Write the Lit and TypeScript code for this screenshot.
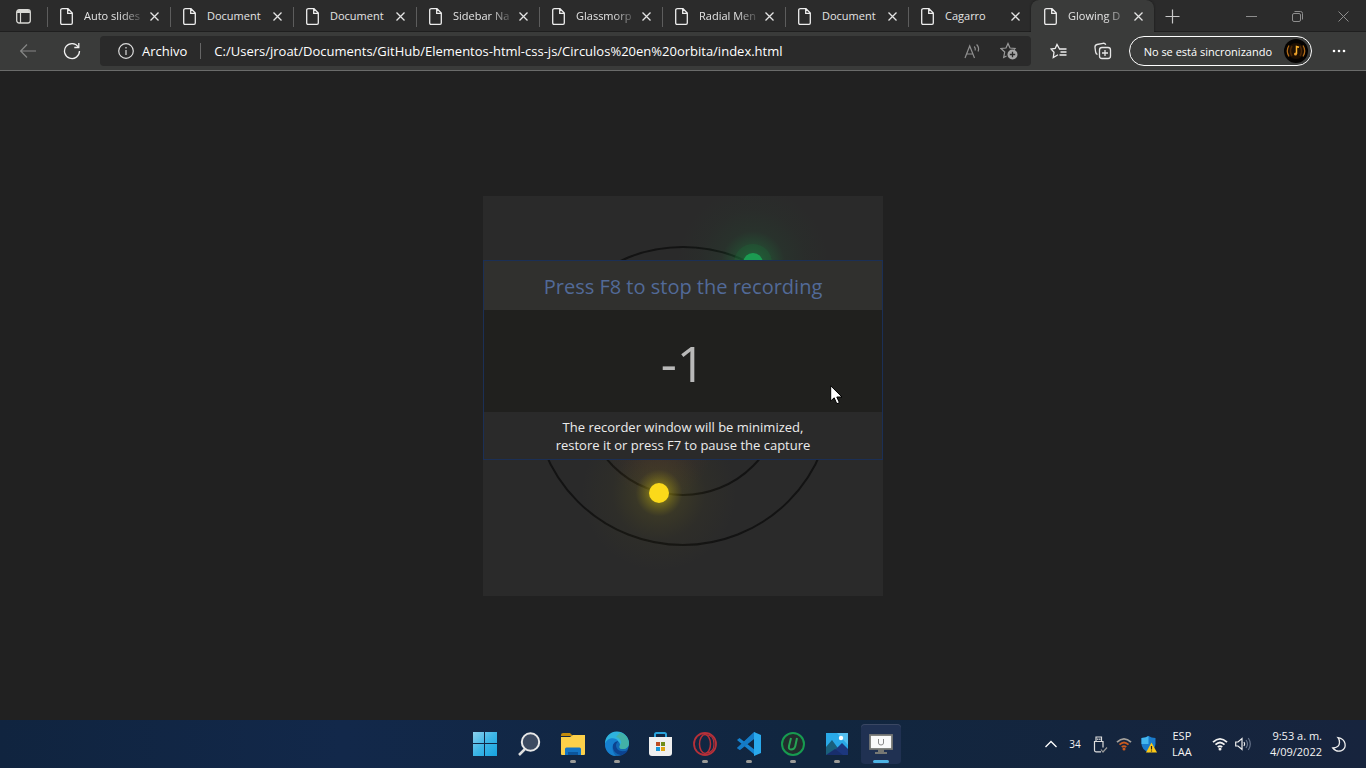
import { LitElement, html, css, svg, nothing } from "lit";
import { customElement } from "lit/decorators.js";
import { classMap } from "lit/directives/class-map.js";

interface Tab { title: string; fade?: boolean; active?: boolean; }

const TABS: Tab[] = [
  { title: "Auto slides", fade: true },
  { title: "Document" },
  { title: "Document" },
  { title: "Sidebar Na", fade: true },
  { title: "Glassmorp", fade: true },
  { title: "Radial Men", fade: true },
  { title: "Document" },
  { title: "Cagarro" },
  { title: "Glowing D", fade: true, active: true },
];

const closeIcon = svg`<path d="M1.500 1.500l8 8M9.500 1.500l-8 8" stroke="currentColor" stroke-width="1.300" fill="none"/>`;

@customElement("browser-tabs")
class BrowserTabs extends LitElement {
  static styles = css`
    :host { display: flex; height: 32px; background: #2b2b2b; color: #e4e4e4; box-shadow: inset 0 -1px #1f1f1f; }
    button { all: unset; box-sizing: border-box; display: flex; align-items: center; justify-content: center; }
    svg { display: block; flex: none; }
    .actions { width: 47px; }
    .tab { display: flex; align-items: center; flex: 0 1 123px; min-width: 0; box-sizing: border-box; padding: 0 10px 0 13px; position: relative; }
    .tab:not(.active)::before { content: ""; position: absolute; left: 0; top: 7px; height: 20px; width: 1px; background: #5d5d5d; }
    .active { background: #3a3b3a; border-radius: 8px 8px 0 0; box-shadow: 0 0 2px #151515; clip-path: inset(-2px -3px 0 -3px); }
    .pick { flex: 1; min-width: 0; justify-content: flex-start; gap: 11px; }
    .title { font-size: 11px; line-height: 16px; white-space: nowrap; width: 62px; }
    .fade { -webkit-mask-image: linear-gradient(90deg, #000 60%, transparent); mask-image: linear-gradient(90deg, #000 60%, transparent); }
    .close { width: 12px; height: 20px; flex: none; }
    .add { width: 36px; }
    .space { flex: 1; }
    .win { width: 46px; color: #8d8d8d; }
  `;
  render() {
    return html`
      <button class="actions" aria-label="Tab actions"><svg width="15" height="15" viewBox="0 0 15 15"><rect x=".7" y=".7" width="13.600" height="13.300" rx="2.500" fill="none" stroke="#d8d8d4" stroke-width="1.300"/><path d="M1 2.500Q1 1 3 1h9q2 0 2 1.500V4H1z" fill="#d8d8d4"/><path d="M4.500 4v10" stroke="#d8d8d4" stroke-width="1.200"/></svg></button>
      ${TABS.map(t => html`<div class=${classMap({ tab: true, active: !!t.active })}>
        <button class="pick"><svg width="13" height="17" viewBox="0 0 13 17"><path d="M2.500 .700H8L12.300 5v10q0 1.300-1.300 1.300H2q-1.300 0-1.300-1.300V2Q.7.700 2.500.700zM7.700 1v4.300h4.500" fill="none" stroke="#ededed" stroke-width="1.300"/></svg><span class=${classMap({ title: true, fade: !!t.fade })}>${t.title}</span></button>
        <button class="close" aria-label="Close tab"><svg width="11" height="11" viewBox="0 0 11 11">${closeIcon}</svg></button>
      </div>`)}
      <button class="add" aria-label="New tab"><svg width="15" height="15" viewBox="0 0 15 15"><path d="M7.500 .500v14M.500 7.500h14" stroke="#c8c8c8" stroke-width="1.200"/></svg></button>
      <span class="space"></span>
      <button class="win" aria-label="Minimize"><svg width="11" height="11"><path d="M0 5.500h11" stroke="currentColor"/></svg></button>
      <button class="win" aria-label="Restore"><svg width="11" height="11" viewBox="0 0 11 11" fill="none" stroke="currentColor"><rect x=".5" y="2.500" width="8" height="8" rx="1.500"/><path d="M2.500 .500H8.500q2 0 2 2v6"/></svg></button>
      <button class="win" aria-label="Close"><svg width="11" height="11" viewBox="0 0 11 11"><path d="M.5.500l10 10M10.500.500l-10 10" stroke="currentColor"/></svg></button>`;
  }
}

@customElement("browser-toolbar")
class BrowserToolbar extends LitElement {
  static styles = css`
    :host { display: flex; align-items: center; height: 38px; background: #3a3b3a; color: #fff; border-bottom: 1px solid #6a6b6a; }
    button { all: unset; box-sizing: border-box; display: flex; align-items: center; justify-content: center; height: 30px; width: 44px; }
    svg { display: block; flex: none; }
    .nav { display: flex; padding: 0 6px; }
    .address { flex: 1; display: flex; align-items: center; height: 30px; box-sizing: border-box; background: #2a2a2a; border-radius: 4px; padding: 0 4px 0 18px; min-width: 0; font-size: 13px; }
    .scheme { padding: 0 13px 0 8px; }
    .bar { width: 1px; height: 16px; background: #666; }
    .url { all: unset; flex: 1; min-width: 0; padding-left: 13px; font-size: 13px; line-height: 20px; }
    .tool { width: 36px; }
    .side { display: flex; padding-left: 6px; }
    .profile { width: auto; border: 1px solid #fff; border-radius: 15px; padding: 0 3px 0 14px; gap: 12px; font-size: 11px; margin-left: 4px; white-space: nowrap; }
    .more { margin: 0 5px; }
  `;
  render() {
    return html`
      <div class="nav">
        <button aria-label="Back"><svg width="16" height="14" viewBox="0 0 16 14"><path d="M7 .500L.700 7 7 13.500M1 7h15" fill="none" stroke="#858685" stroke-width="1.200"/></svg></button>
        <button aria-label="Reload"><svg width="18" height="18" viewBox="0 0 18 18" fill="none" stroke="#f1f1f1" stroke-width="1.300"><path d="M15.300 5A7.500 7.500 0 1 0 16.500 9"/><path d="M15.800 1v4.500h-4.500"/></svg></button>
      </div>
      <div class="address">
        <svg width="16" height="16" viewBox="0 0 16 16" fill="none" stroke="#dcdcdc" stroke-width="1.200"><circle cx="8" cy="8" r="7.300"/><path d="M8 7v5M8 4v1.500"/></svg>
        <label class="scheme" for="url">Archivo</label><span class="bar"></span>
        <input id="url" class="url" value="C:/Users/jroat/Documents/GitHub/Elementos-html-css-js/Circulos%20en%20orbita/index.html">
        <button class="tool" aria-label="Read aloud"><svg width="17" height="15" viewBox="0 0 17 15" fill="none" stroke="#8f8f8f" stroke-width="1.200"><path d="M1 14L5.700 2 10.500 14M2.500 10h6.500M10.200 2.500q1.500 1.500 1 4M12.600 .500q3 3 1.500 7"/></svg></button>
        <button class="tool" aria-label="Add to favorites"><svg width="18" height="18" viewBox="0 0 18 18"><path d="M6.500 14L3.700 15.500l1-5.500L1 6.500 6 6l2-4.500L10 6l5 .500-1 1" fill="none" stroke="#9a9a9a" stroke-width="1.200"/><circle cx="12.500" cy="12.500" r="5" fill="#a7a7a7"/><path d="M12.500 9.800v5.400M9.800 12.500h5.400" stroke="#2a2a2a" stroke-width="1.300"/></svg></button>
      </div>
      <div class="side">
        <button aria-label="Favorites"><svg width="18" height="16" viewBox="0 0 18 16" fill="none" stroke="#eee" stroke-width="1.300"><path d="M9.500 6L7 1.500 5.200 5.500 1 6l3 3.300L3.300 14.500 8 11.800M9 6h7.500M10.500 9h6M9.500 12h7"/></svg></button>
        <button aria-label="Collections"><svg width="18" height="18" viewBox="0 0 18 18" fill="none" stroke="#e6e6e6" stroke-width="1.300"><rect x="5.500" y="5.500" width="11" height="11" rx="2.500"/><path d="M11 8v6M8 11h6M3.500 12.500Q2 12 1.600 10L1 5.500Q.8 3 3 2.500L9 1.300q2-.3 2.800 1.500"/></svg></button>
        <button class="profile">No se está sincronizando<svg width="24" height="24" viewBox="0 0 24 24"><circle cx="12" cy="12" r="12" fill="#050302"/><circle cx="12" cy="12" r="8" fill="#1d0f03"/><path d="M5 6.500Q1.500 12 5 17.500M19 6.500Q22.500 12 19 17.500" fill="none" stroke="#b06a18" stroke-width="1.300"/><path d="M8 7Q5 12 8 17M16 7Q19 12 16 17" fill="none" stroke="#4c2807" stroke-width="1.500"/><path d="M12.500 15V7.500l2.500.7" fill="none" stroke="#ffb52c" stroke-width="1.500"/><circle cx="11.500" cy="15" r="1.500" fill="#e89b28"/></svg></button>
        <button class="more" aria-label="Settings"><svg width="14" height="4"><circle cx="2" cy="2" r="1.300" fill="#fff"/><circle cx="7" cy="2" r="1.300" fill="#fff"/><circle cx="12" cy="2" r="1.300" fill="#fff"/></svg></button>
      </div>`;
  }
}

@customElement("orbit-page")
class OrbitPage extends LitElement {
  static styles = css`
    :host { flex: 1; display: grid; place-items: center; background: #212121; min-height: 0; }
    .card { position: relative; width: 400px; height: 400px; background: #2a2a2a; }
    .scene { display: block; width: 100%; height: 100%; }
    .recorder { position: absolute; left: 0; right: 0; top: 64px; box-sizing: border-box; border: 1px solid #1b2f55; background: #2a2a2a; text-align: center; color: #ececec; }
    .head { background: #30302e; color: #526a98; font-size: 20px; font-weight: 400; line-height: 49px; padding-top: 1px; height: 48px; margin: 0; }
    .count { background: #20201e; color: #b9b9b9; font-size: 50px; line-height: 98px; padding-top: 4px; }
    .note { margin: 0; padding: 6px 0 5px; font-size: 13px; line-height: 18px; }
    .cursor { position: absolute; left: 347px; top: 189px; }
  `;
  render() {
    return html`<div class="card">
      <svg class="scene" viewBox="0 0 400 400">
        <defs>
          <radialGradient id="g"><stop offset="0" stop-color="#1c9c50" stop-opacity=".5"/><stop offset=".22" stop-color="#1c8040" stop-opacity=".34"/><stop offset=".42" stop-color="#1c8040" stop-opacity=".09"/><stop offset=".7" stop-color="#1c8040" stop-opacity=".03"/><stop offset="1" stop-color="#1c8040" stop-opacity="0"/></radialGradient>
          <radialGradient id="y"><stop offset="0" stop-color="#fada15" stop-opacity=".5"/><stop offset=".13" stop-color="#b8a810" stop-opacity=".48"/><stop offset=".3" stop-color="#a09010" stop-opacity=".13"/><stop offset=".6" stop-color="#908010" stop-opacity=".04"/><stop offset="1" stop-color="#908010" stop-opacity="0"/></radialGradient>
          <radialGradient id="r"><stop offset="0" stop-color="#ff4040" stop-opacity=".07"/><stop offset="1" stop-color="#ff4040" stop-opacity="0"/></radialGradient>
        </defs>
        <circle cx="200" cy="200" r="149" fill="none" stroke="#131313" stroke-width="2"/>
        <circle cx="200" cy="200" r="99" fill="none" stroke="#131313" stroke-width="2"/>
        <circle cx="176" cy="250" r="55" fill="url(#r)"/>
        <circle cx="270" cy="67" r="76" fill="url(#g)"/><circle cx="270" cy="67" r="19" fill="#1f6a38" fill-opacity=".3"/><circle cx="270" cy="67" r="10" fill="#1b9b51"/>
        <circle cx="176" cy="297" r="78" fill="url(#y)"/><circle cx="176" cy="297" r="10" fill="#fbd91a"/>
      </svg>
      <section class="recorder">
        <h1 class="head">Press F8 to stop the recording</h1>
        <div class="count">-1</div>
        <p class="note">The recorder window will be minimized,<br>restore it or press F7 to pause the capture</p>
      </section>
      <svg class="cursor" width="13" height="20" viewBox="0 0 13 20"><path d="M.7.800V16l3.500-3.200 2.600 6 2.600-1.200-2.600-5.600H12z" fill="#fff" stroke="#000" stroke-width="1"/></svg>
    </div>`;
  }
}

const wifi = (a: string, b: string) => svg`<g fill="none" stroke-width="1.800"><path d="M1 5.200Q8-1.500 15 5.200" stroke=${a}/><path d="M3.500 7.700Q8 3.300 12.500 7.700" stroke=${b}/><path d="M5.800 10.200Q8 8 10.200 10.200" stroke=${b}/></g><circle cx="8" cy="12" r="1.500" fill=${b}/>`;

const APPS = [
  { name: "Inicio", run: 0, art: svg`<defs><linearGradient id="w" x2="1" y2="1"><stop stop-color="#8bd0ee"/><stop offset=".5" stop-color="#3cb5e6"/><stop offset="1" stop-color="#16a3e0"/></linearGradient></defs><path d="M0 0h11v11H0zM12 0h12v11H12zM0 12h11v12H0zM12 12h12v12H12z" fill="url(#w)"/>` },
  { name: "Buscar", run: 0, art: svg`<path d="M8 17L2 23" stroke="#dedede" stroke-width="2.500"/><circle cx="13.500" cy="10" r="8.700" fill="#3c4a61" stroke="#e8e8e8" stroke-width="2"/>` },
  { name: "Explorador", run: 1, art: svg`<path d="M0 3q0-2 2-2h7l3 3H0z" fill="#c28a0b"/><path d="M0 5h9l3-2h12v19q0 1-1 1H1q-1 0-1-1z" fill="#fcd04a"/><path d="M4 23v-6q0-1.500 1.500-1.500h13q1.500 0 1.500 1.500v6z" fill="#1474c4"/><path d="M7 23v-3h10v3" fill="#0c559c"/>` },
  { name: "Edge", run: 1, art: svg`<circle cx="12" cy="12" r="12" fill="#1268b4"/><path d="M0 12A12 12 0 0 1 24 11c0 4-3 6-6 6-4 0-4-2-3-4C15 7 4 5 0 12z" fill="#2eb2dd"/><path d="M15 .500A12 12 0 0 1 24 11c0 4-3 6-6 6-4 0-4-2-3-4 3-3 0-7-4-8z" fill="#50b083" fill-opacity=".6"/><path d="M10 9c-5 5-1 14 7 14 3-1 5-3 6-5-7 3-12 0-12-5 0-2 2-3 2-4z" fill="#0c4390"/><path d="M0 12c2-7 11-7 13-3-7 1-7 10-2 15C4 24 0 18 0 12z" fill="#1680cf"/>` },
  { name: "Store", run: 0, art: svg`<path d="M6 6V2.500Q6 1 7.500 1h8Q17 1 17 2.500V6" fill="none" stroke="#29a3dc" stroke-width="2"/><path d="M0 5h23v16q0 3-3 3H3q-3 0-3-3z" fill="#efefef"/><path d="M7 10h4v4H7z" fill="#bc4b20"/><path d="M12 10h4v4h-4z" fill="#6f8c18"/><path d="M7 15h4v4H7z" fill="#1596d8"/><path d="M12 15h4v4h-4z" fill="#e0a512"/>` },
  { name: "Opera", run: 1, art: svg`<g fill="none" stroke="#b53039"><circle cx="12" cy="12" r="11" stroke-width="1.800"/><ellipse cx="12" cy="12" rx="5.500" ry="9.500" stroke-width="1.500"/><path d="M13 3q8 0 8 9t-8 9" stroke-width="1.200"/></g>` },
  { name: "VS Code", run: 1, art: svg`<path d="M0 8l2.500-2L18 18v5L0 8z" fill="#1583d0"/><path d="M0 16l2.500 2L18 6V0L0 16z" fill="#1269b5"/><path d="M17 0l7 3v18l-7 3z" fill="#29a9ec"/><path d="M0 16L17 0v7L3 18z" fill="#147bc6"/>` },
  { name: "uTorrent", run: 1, art: svg`<circle cx="12" cy="12" r="11" fill="#222d2d" stroke="#179b50" stroke-width="2"/><path d="M10 6L8 14q-.7 3.500 2 3.500 3.500 0 4.300-3.500L16 6" fill="none" stroke="#26a354" stroke-width="2"/>` },
  { name: "Fotos", run: 1, art: svg`<path d="M1 1h22v22H1z" fill="#29a9e8"/><path d="M12 1h11v12z" fill="#54bff0"/><circle cx="16" cy="6" r="2.200" fill="#fff"/><path d="M1 15l6-7 11 15H1z" fill="#195f7c"/><path d="M5 23l12-12 6 6v6z" fill="#1c377e"/><path d="M1 23l9-6 8 6z" fill="#182e6c"/>` },
  { name: "Grabador", run: 2, art: svg`<rect x="1" y="3" width="22" height="14" fill="#fafafa" stroke="#777874" stroke-width="1.800"/><path d="M9.500 7v4q0 2 2.500 2t2.500-2V7" fill="none" stroke="#888" stroke-width="1"/><path d="M9 17h6v3h3v2H6v-2h3z" fill="#777874"/>` },
];

@customElement("task-bar")
class TaskBar extends LitElement {
  static styles = css`
    :host { display: grid; grid-template-columns: 1fr auto 1fr; align-items: center; height: 48px; background: linear-gradient(90deg, #10243f, #12284a 25%, #11263f 60%, #17243d); color: #f4f4f4; padding: 0 20px; }
    button { all: unset; display: flex; align-items: center; justify-content: center; }
    svg { display: block; flex: none; overflow: visible; }
    .apps { grid-column: 2; display: flex; gap: 4px; }
    .app { position: relative; width: 40px; height: 40px; border-radius: 4px; }
    .on { background: #203152; box-shadow: inset 0 1px #3a4762; }
    .dot { position: absolute; bottom: 1px; left: 17px; right: 17px; height: 3px; border-radius: 2px; background: #9b9b98; }
    .on .dot { left: 12px; right: 12px; background: #4cb3e4; }
    .tray { display: flex; align-items: center; justify-content: flex-end; font-size: 11px; line-height: 16px; text-align: center; }
    .group { display: flex; align-items: center; gap: 9px; }
    .count { width: 18px; font-size: 10px; }
    .lang { width: 50px; padding-right: 5px; }
    .status { gap: 7px; }
    .clock { text-align: right; padding: 0 10px 0 19px; }
  `;
  render() {
    return html`
      <nav class="apps">${APPS.map(a => html`<button class=${classMap({ app: true, on: a.run === 2 })} aria-label=${a.name}><svg width="24" height="24" viewBox="0 0 24 24">${a.art}</svg>${a.run ? html`<span class="dot"></span>` : nothing}</button>`)}</nav>
      <div class="tray">
        <div class="group">
          <button aria-label="Mostrar iconos"><svg width="12" height="8" viewBox="0 0 12 8"><path d="M.5 7L6 1.500 11.500 7" fill="none" stroke="#fff" stroke-width="1.300"/></svg></button>
          <span class="count">34</span>
          <svg width="14" height="17" viewBox="0 0 14 17" fill="none" stroke="#ddd" stroke-width="1.200"><path d="M3 5.500V1h5.500v4.500M8 15.800H3q-1.500 0-1.500-1.500V5.500H10v6M4.800 2.500v1.500M6.800 2.500v1.500"/><path d="M8 13.500l2 2.500L14 11.500" stroke="#999"/></svg>
          <svg width="16" height="14" viewBox="0 0 16 14">${wifi("#a6a29c", "#c85a20")}</svg>
          <svg width="16" height="17" viewBox="0 0 16 17"><path d="M7.500 0q3 2 7 2v6q0 5-7 8.500Q.5 13 .5 8V2q4 0 7-2z" fill="#1a7bcb"/><path d="M7.500 0v8H.500V2q4 0 7-2z" fill="#43b6ee"/><path d="M10.500 6.500L16 16.500H5z" fill="#fcc917"/><path d="M10.500 10v3.500M10.500 14.500v1" stroke="#222" stroke-width="1.200"/></svg>
        </div>
        <div class="lang">ESP<br>LAA</div>
        <div class="group status">
          <svg width="16" height="14" viewBox="0 0 16 14">${wifi("#f0f0f0", "#f0f0f0")}</svg>
          <svg width="16" height="14" viewBox="0 0 16 14" fill="none" stroke="#eee" stroke-width="1.200"><path d="M.700 5H3l4-3.500v11L3 9H.700zM9 5q1.300 2 0 4"/><path d="M11 3q3 4 0 8M13.300 1q4 6 0 12" stroke="#66738a"/></svg>
        </div>
        <div class="clock">9:53 a. m.<br>4/09/2022</div>
        <svg width="14" height="15" viewBox="0 0 14 15"><path d="M6 .700q6 1 7 6t-3.500 7Q4.500 15.500.800 11 7.500 10.500 7.500 5.500 7.500 2.500 6 .700z" fill="none" stroke="#eee" stroke-width="1.300"/></svg>
      </div>`;
  }
}

@customElement("app-root")
class AppRoot extends LitElement {
  static styles = css`
    :host { display: flex; flex-direction: column; height: 100vh; overflow: hidden; font-family: "Open Sans", "Noto Sans", sans-serif; }
    browser-tabs, browser-toolbar, task-bar { flex: none; }
  `;
  render() {
    return html`<browser-tabs></browser-tabs><browser-toolbar></browser-toolbar><orbit-page></orbit-page><task-bar></task-bar>`;
  }
}
